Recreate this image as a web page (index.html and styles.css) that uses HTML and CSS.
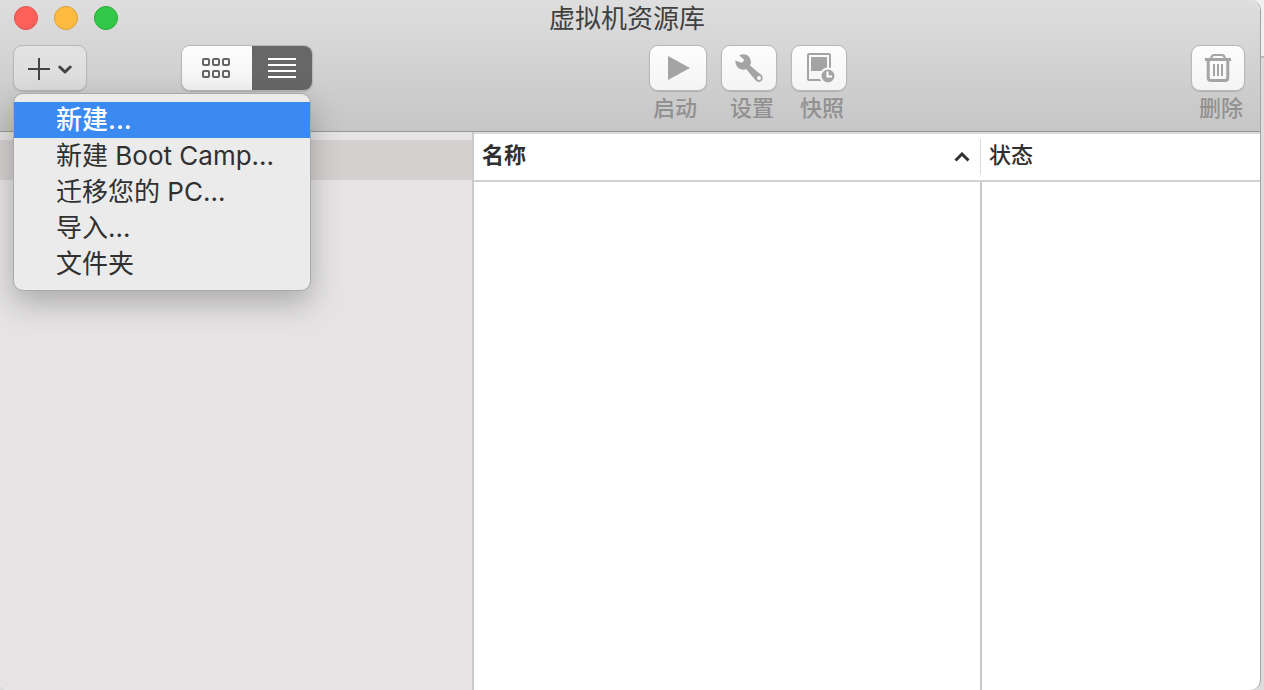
FILE: index.html
```html
<!DOCTYPE html>
<html lang="zh-CN">
<head>
<meta charset="utf-8">
<meta name="viewport" content="width=device-width, initial-scale=1">
<title>虚拟机资源库</title>
<link rel="stylesheet" href="styles.css">
</head>
<body>
<div class="window">
  <header class="header">
    <div class="titlebar">
      <div class="lights">
        <button class="light light-close" aria-label="关闭"></button>
        <button class="light light-min" aria-label="最小化"></button>
        <button class="light light-max" aria-label="缩放"></button>
      </div>
      <h1 class="title">虚拟机资源库</h1>
    </div>
    <div class="toolbar">
      <div class="add">
        <button class="btn add-btn" aria-label="添加" aria-haspopup="menu" aria-expanded="true">
          <svg width="22" height="24" viewBox="0 0 22 24" fill="none" stroke="#444" stroke-width="2"><path d="M0 13H22M11 2V24"/></svg>
          <svg width="14" height="12" viewBox="0 0 14 12" fill="none" stroke="#444" stroke-width="3" stroke-linecap="round" stroke-linejoin="round"><path d="M1.8 5L7 10L12.2 5"/></svg>
        </button>
        <div class="menu" role="menu">
          <button class="menu-item selected" role="menuitem">新建...</button>
          <button class="menu-item" role="menuitem">新建 Boot Camp...</button>
          <button class="menu-item" role="menuitem">迁移您的 PC...</button>
          <button class="menu-item" role="menuitem">导入...</button>
          <button class="menu-item" role="menuitem">文件夹</button>
        </div>
      </div>
      <div class="segmented">
        <button class="seg seg-grid" aria-label="图标视图">
          <svg width="30" height="20" viewBox="0 0 30 20" fill="none" stroke="#666" stroke-width="2"><rect x="1" y="1" width="6" height="6" rx="1"/><rect x="11" y="1" width="6" height="6" rx="1"/><rect x="21" y="1" width="6" height="6" rx="1"/><rect x="1" y="13" width="6" height="6" rx="1"/><rect x="11" y="13" width="6" height="6" rx="1"/><rect x="21" y="13" width="6" height="6" rx="1"/></svg>
        </button>
        <button class="seg seg-list" aria-label="列表视图" aria-pressed="true">
          <svg width="28" height="20" viewBox="0 0 28 20" stroke="#fff" stroke-width="2"><path d="M0 1H28M0 7H28M0 13H28M0 19H28"/></svg>
        </button>
      </div>
      <div class="tools">
        <div class="tool tool-start">
          <button class="btn tool-btn" aria-labelledby="l-start">
            <svg width="24" height="24" viewBox="0 0 24 24" fill="#a4a4a4"><path d="M2 0L24 12L2 24Z"/></svg>
          </button>
          <span class="label" id="l-start">启动</span>
        </div>
        <div class="tool">
          <button class="btn tool-btn" aria-labelledby="l-set">
            <svg width="28" height="28" viewBox="0 0 28 28"><path d="M.3 6.6L5.6 8.6Q8.8 8.4 9 5.4L4.2 1.6Q9-1 13 1.8Q17 5.2 15.6 10.2L12.2 14.4Q8 17 4 14.6Q.2 11.5 .3 6.6Z" fill="#a4a4a4"/><path d="M14.2 10.8L26.6 21.3Q28.8 24.6 26.4 27Q23.6 29 20.7 26.5L11.2 15Z" fill="#a4a4a4"/><circle cx="24" cy="24" r="2" fill="#f8f8f8"/></svg>
          </button>
          <span class="label" id="l-set">设置</span>
        </div>
        <div class="tool">
          <button class="btn tool-btn" aria-labelledby="l-snap">
            <svg width="32" height="30" viewBox="0 0 32 30"><rect x="5" y="1" width="22" height="26" rx="1" fill="none" stroke="#a4a4a4" stroke-width="2"/><path d="M8 4H24V18H8Z" fill="#a4a4a4"/><circle cx="25" cy="23" r="7.5" fill="#a4a4a4" stroke="#f9f9f9" stroke-width="2"/><path d="M24.5 18.5V23.5H29" fill="none" stroke="#fff" stroke-width="2"/></svg>
          </button>
          <span class="label" id="l-snap">快照</span>
        </div>
      </div>
      <div class="tool tool-delete">
        <button class="btn tool-btn" aria-labelledby="l-del">
          <svg width="26" height="28" viewBox="0 0 26 28" fill="none" stroke="#a4a4a4"><path d="M0 5.5H26" stroke-width="3"/><path d="M6 4.5Q6.5 1 9.5 1H16.5Q19.5 1 20 4.5" stroke-width="2"/><path d="M3.2 6V23.5Q3.2 26.5 6.2 26.5H19.8Q22.8 26.5 22.8 23.5V6" stroke-width="3"/><path d="M9 10V22M13 10V22M17 10V22" stroke-width="2"/></svg>
        </button>
        <span class="label" id="l-del">删除</span>
      </div>
    </div>
  </header>
  <main class="content">
    <nav class="sidebar" aria-label="资源库"><div class="sidebar-row"></div></nav>
    <table class="list">
      <thead>
        <tr>
          <th class="col-name" scope="col" aria-sort="ascending">
            <div class="head"><span>名称</span>
              <svg width="16" height="10" viewBox="0 0 16 10" fill="none" stroke="#333" stroke-width="3"><path d="M1.5 8.5L8 2L14.5 8.5"/></svg>
            </div>
          </th>
          <th class="col-state" scope="col"><div class="head">状态</div></th>
        </tr>
      </thead>
      <tbody><tr><td class="cell-name"></td><td></td></tr></tbody>
    </table>
  </main>
</div>
</body>
</html>
```
FILE: styles.css
```css
* { box-sizing: border-box; }
body {
  margin: 0;
  background: linear-gradient(#f0f0f0 0 56px, #b9b9b9 56px 58px, #dcdcdc 58px);
  font-family: Inter, "Noto Sans CJK SC", sans-serif;
  color: #303030;
}
button { margin: 0; padding: 0; border: 0; font: inherit; color: inherit; }
svg { display: block; flex: none; }

.window {
  display: flex;
  flex-direction: column;
  min-height: 100vh;
  margin-right: 3px;
  border-right: 1px solid #a2a2a2;
  border-radius: 0 10px 10px 8px;
  background: #fff;
  overflow: hidden;
}

.header {
  height: 132px;
  border-bottom: 1px solid #989898;
  background: linear-gradient(#dedede, #c6c6c6);
}
.titlebar {
  display: grid;
  grid-template-columns: 1fr auto 1fr;
  align-items: center;
  height: 36px;
  padding: 0 20px 0 14px;
}
.lights { display: flex; gap: 16px; }
.light { width: 24px; height: 24px; border: 1px solid; border-radius: 50%; }
.light-close { background: #fc605b; border-color: #e0504c; }
.light-min { background: #fdbc40; border-color: #dd9f34; }
.light-max { background: #34c84a; border-color: #27aa35; }
.title {
  margin: 0;
  padding-top: 2px;
  font-size: 26px;
  line-height: 34px;
  font-weight: 400;
  color: #404040;
}

.toolbar {
  display: flex;
  align-items: flex-start;
  padding: 9px 15px 0 13px;
}
.btn {
  display: flex;
  align-items: center;
  justify-content: center;
  height: 46px;
  border: 1px solid #b8b8b8;
  border-radius: 9px;
  background: linear-gradient(#fdfdfd, #f4f4f4);
  box-shadow: 0 1px 1px #b0b0b0;
}
.add { position: relative; }
.add-btn {
  gap: 8px;
  width: 74px;
  background: linear-gradient(#e2e2e2, #dcdcdc);
}

.menu {
  position: absolute;
  top: 48px;
  left: 0;
  z-index: 1;
  width: 298px;
  padding: 8px 0;
  border: 1px solid #a9a9a9;
  border-radius: 10px;
  background: #ebebeb;
  box-shadow: 0 12px 30px rgba(0, 0, 0, .25);
}
.menu-item {
  display: block;
  width: 100%;
  height: 36px;
  padding: 0 0 0 42px;
  background: none;
  font-size: 26px;
  line-height: 34px;
  text-align: left;
  white-space: nowrap;
}
.menu-item.selected { background: #3b8af2; color: #fff; font-weight: 500; }

.segmented {
  display: flex;
  height: 46px;
  margin-left: 94px;
  border: 1px solid #b8b8b8;
  border-radius: 9px;
  box-shadow: 0 1px 1px #b0b0b0;
  overflow: hidden;
}
.seg { display: flex; align-items: center; justify-content: center; }
.seg-grid { width: 70px; background: linear-gradient(#fdfdfd, #f2f2f2); }
.seg-list { width: 60px; background: #676767; }

.tools { display: flex; gap: 14px; margin-left: 336px; }
.tool { display: flex; flex-direction: column; width: 56px; }
.label {
  padding-left: 6px;
  font-size: 22px;
  line-height: 34px;
  font-weight: 500;
  text-align: center;
  color: #919191;
}
.tool-start { width: 58px; }
.tool-start .label { padding: 0 6px 0 0; }
.tool-delete { width: 54px; margin-left: auto; }

.content { display: grid; grid-template-columns: 474px 1fr; flex: 1; }
.sidebar {
  padding-top: 8px;
  border-right: 2px solid #cbcbcb;
  background: #e5e3e4;
}
.sidebar-row { height: 40px; background: #d4d0d0; }

.list {
  width: 100%;
  height: 100%;
  border-collapse: collapse;
  border-top: 2px solid #dadada;
  table-layout: fixed;
  font-size: 22px;
}
.list th { height: 48px; padding: 5px 0; border-bottom: 2px solid #d2d2d2; text-align: left; }
.list td { padding: 0; }
.head {
  display: flex;
  align-items: center;
  justify-content: space-between;
  height: 36px;
  padding: 0 10px 0 8px;
  line-height: 32px;
}
.head span { padding-bottom: 4px; }
.col-name { width: 507px; }
.col-name .head { border-right: 1px solid #dcdcdc; }
.list .col-state { font-weight: 500; }
.col-state .head { padding-bottom: 4px; }
.cell-name { border-right: 2px solid #c8c8c8; }
```
